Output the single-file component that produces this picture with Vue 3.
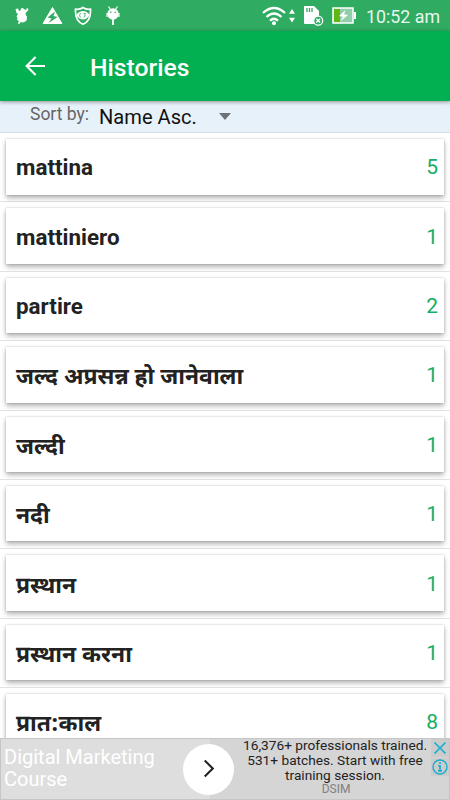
<template>
  <div class="screen">
    <div class="status-bar">
      <div class="notifications">
        <svg class="icon" viewBox="0 0 14 18">
          <path
            fill="#fff"
            d="M.5 2L3 1.500 4 4l1.500-.5.5-2 2-.5 1.500 1.500 2 .5V1l1.500.5.5 1.500-2 2-1 1.500.5 2 1 1-.5 4-2 1.500-2 .5-2-.5-.5 1.500L3.500 17l-.5-1 1-2-2-1 .5-2.500L1.500 10 2 8.500l1-1.500-1.500-1z"
          />
        </svg>
        <svg class="icon wide" viewBox="0 0 20 20">
          <path fill="#fff" stroke="#fff" stroke-linejoin="round" d="M10 1.500L19.400 17.500H.6z" />
          <path fill="#2fab62" d="M12.500 5.500L5 11.500l4 1-3 4.500 9-6-4-1z" />
        </svg>
        <svg class="icon wide shield" viewBox="0 0 18 20">
          <path
            fill="none"
            stroke="#fff"
            stroke-width="1.700"
            d="M9 1.500c2 1.500 5 2 7.500 1.700C17 11 14.500 16 9 18.300 3.500 16 1 11 1.500 3.200 4 3.500 7 3 9 1.500z"
          />
          <path fill="#fff" d="M2.500 9c3-5.500 10-5.500 13 0-3 6-10 6-13 0z" />
          <path fill="none" stroke="#2fab62" stroke-width=".8" d="M6.500 7q-2 2.500 0 4.500M9.500 7.500h2l-1 1.500q2 1-1 2.200" />
        </svg>
        <svg class="icon robot" viewBox="0 0 14 20">
          <path stroke="#fff" stroke-width="1.200" d="M2.500.5l2 3M11.500.5l-2 3" />
          <circle cx="7" cy="8" r="5.700" fill="#fff" />
          <path stroke="#fff" stroke-width="1.800" d="M7 13v6" />
          <path stroke="#fff" stroke-width="1.200" d="M1 7v4M13 7v4" />
          <circle cx="4.800" cy="6.300" r=".8" fill="#2fab62" />
          <circle cx="9.200" cy="6.300" r=".8" fill="#2fab62" />
        </svg>
      </div>
      <div class="system">
        <svg class="wifi" viewBox="0 0 34 22">
          <g fill="none" stroke="#fff" stroke-width="2.300">
            <path d="M1 8q11-10 22 0M4.500 12q7.500-7 15 0M8 15.700q4-4 8 0" />
          </g>
          <circle cx="12" cy="18.300" r="2" fill="#fff" />
          <path fill="#fff" d="M30 4l3 4.700h-6zM30 17.500l3-4.700h-6z" />
        </svg>
        <svg class="sd" viewBox="0 0 21 22">
          <path fill="#fff" d="M1 1h10l5 5v13H2q-1 0-1-1z" />
          <path stroke="#2fab62" stroke-width="1.300" d="M4 3v4M6.500 3v4M9 3v4" />
          <circle cx="15.200" cy="15.700" r="4.500" fill="#2fab62" stroke="#fff" stroke-width="1.300" />
          <path stroke="#fff" stroke-width="1.400" d="M13.300 13.800l3.800 3.800M17.100 13.800l-3.800 3.800" />
        </svg>
        <svg class="battery" viewBox="0 0 25 18">
          <path fill="#8fcfa9" stroke="#fff" stroke-width="1.500" d="M1 1h20v15H1z" />
          <path fill="#63b512" d="M2 2h6v13H2z" />
          <path fill="#fff" d="M22 5h2v7h-2zM13.500 3L7 9l4 .7L8 14.500 16 8l-4-.7z" />
        </svg>
        <span class="clock">10:52 am</span>
      </div>
    </div>

    <header class="app-bar">
      <svg class="back" viewBox="0 0 20 20">
        <path fill="none" stroke="#fff" stroke-width="2.100" d="M20 10H1.800M10.600 1L1.600 10l9 9" />
      </svg>
      <h1>Histories</h1>
    </header>

    <div class="sort-bar">
      <span class="sort-label">Sort by:</span>
      <span class="sort-value">Name Asc.</span>
      <span class="caret"></span>
    </div>

    <ul class="list">
      <li v-for="item in histories" :key="item.word" class="row">
        <div class="card">
          <span class="word" :class="{ hindi: item.hindi }">{{ item.word }}</span>
          <span class="count">{{ item.count }}</span>
        </div>
      </li>
    </ul>

    <div class="ad">
      <div class="ad-title">Digital Marketing<br />Course</div>
      <div class="ad-body">
        <p>16,376+ professionals trained.<br />531+ batches. Start with free<br />training session.</p>
        <small>DSIM</small>
      </div>
      <div class="ad-go">
        <svg viewBox="0 0 12 20">
          <path fill="none" stroke="#222" stroke-width="2.200" d="M1.500 1.500L10 10l-8.500 8.500" />
        </svg>
      </div>
      <div class="ad-controls">
        <svg viewBox="0 0 18 18">
          <path stroke="#17aed0" stroke-width="1.700" d="M3.500 3.500l11 11M14.500 3.500l-11 11" />
        </svg>
        <svg viewBox="0 0 18 18">
          <circle cx="9" cy="9" r="7" fill="none" stroke="#17aed0" stroke-width="1.400" />
          <path fill="none" stroke="#17aed0" stroke-width="1.700" d="M9 4.200v1.900M7.300 7.900H9v4.900M7 12.800h4" />
        </svg>
      </div>
    </div>
  </div>
</template>

<script setup>
import { ref } from "vue";

const histories = ref([
  { word: "mattina", count: 5 },
  { word: "mattiniero", count: 1 },
  { word: "partire", count: 2 },
  { word: "जल्द अप्रसन्न हो जानेवाला", count: 1, hindi: true },
  { word: "जल्दी", count: 1, hindi: true },
  { word: "नदी", count: 1, hindi: true },
  { word: "प्रस्थान", count: 1, hindi: true },
  { word: "प्रस्थान करना", count: 1, hindi: true },
  { word: "प्रात:काल", count: 8, hindi: true },
]);
</script>

<style>
body {
  margin: 0;
}
</style>

<style scoped>
.screen {
  position: relative;
  display: flex;
  flex-direction: column;
  width: 450px;
  height: 800px;
  overflow: hidden;
  background: #fff;
  font-family: Roboto, "Noto Sans", sans-serif;
}

.status-bar {
  display: flex;
  flex: none;
  align-items: center;
  justify-content: space-between;
  box-sizing: border-box;
  height: 31px;
  padding: 0 10px 0 15px;
  background: #2fab62;
}

.notifications,
.system {
  display: flex;
  align-items: center;
}

.icon {
  width: 14px;
  height: 18px;
}

.icon.wide {
  width: 21px;
  height: 20px;
  margin-left: 13px;
}

.icon.shield {
  width: 18px;
  margin-left: 11px;
}

.icon.robot {
  height: 20px;
  margin-left: 14px;
}

.wifi {
  width: 34px;
  height: 22px;
}

.sd {
  width: 21px;
  height: 22px;
  margin-left: 7px;
}

.battery {
  width: 25px;
  height: 18px;
  margin-left: 8px;
}

.clock {
  margin-left: 9px;
  padding-top: 2px;
  color: #e8f7ee;
  font-size: 17.800px;
  line-height: 29px;
  white-space: nowrap;
}

.app-bar {
  z-index: 1;
  display: flex;
  flex: none;
  align-items: center;
  box-sizing: border-box;
  height: 70px;
  padding: 3px 0 0 25px;
  background: #02af51;
  box-shadow: 0 1px 4px rgba(0, 0, 0, 0.4);
}

.back {
  width: 20px;
  height: 20px;
  margin-top: -3px;
}

.app-bar h1 {
  margin: 0 0 0 45px;
  color: #fff;
  font-size: 24.700px;
  font-weight: 500;
}

.sort-bar {
  display: flex;
  flex: none;
  box-sizing: border-box;
  height: 32px;
  padding-left: 30px;
  border-bottom: 1px solid #d3dde3;
  background: #e7f1f9;
}

.sort-label {
  width: 69px;
  color: #666;
  font-size: 17.500px;
  line-height: 27px;
}

.sort-value {
  width: 120px;
  color: #111;
  font-size: 20.100px;
  line-height: 32px;
}

.caret {
  width: 0;
  height: 0;
  margin-top: 12px;
  border: 6px solid transparent;
  border-top: 7px solid #6c7276;
  border-bottom: 0;
}

.list {
  flex: none;
  margin: 0;
  padding: 0;
  list-style: none;
}

.row {
  box-sizing: border-box;
  height: 69.400px;
  padding: 6px 6px 0;
  border-bottom: 1px solid #e3e3e3;
}

.card {
  display: flex;
  align-items: center;
  justify-content: space-between;
  box-sizing: border-box;
  height: 55.500px;
  padding: 1px 6px 0 10px;
  background: #fff;
  box-shadow: 0 3px 5px rgba(0, 0, 0, 0.3), 0 0 2px rgba(0, 0, 0, 0.2);
}

.word {
  color: #222;
  font-size: 22.400px;
  font-weight: 700;
  white-space: nowrap;
}

.word.hindi {
  padding-top: 6px;
  font-family: "Noto Sans Devanagari", "Noto Sans", sans-serif;
  font-size: 22.900px;
  line-height: 34px;
}

.count {
  color: #14ae64;
  font-size: 21px;
}

.ad {
  position: absolute;
  right: 0;
  bottom: 0;
  left: 0;
  display: flex;
  box-sizing: border-box;
  height: 62px;
  border: 1px solid #c6c6c6;
  background: #d5d5d5;
}

.ad-title {
  flex: none;
  box-sizing: border-box;
  width: 209px;
  padding: 7px 0 0 3px;
  background: #dedede;
  color: #fff;
  font-size: 20px;
  line-height: 22px;
}

.ad-body {
  flex: none;
  width: 250px;
  color: #222;
  font-size: 13.700px;
  line-height: 15px;
  text-align: center;
}

.ad-body p {
  margin: -1px 0 0;
}

.ad-body small {
  display: block;
  margin-left: 2px;
  color: #808080;
  font-size: 12px;
  line-height: 13px;
}

.ad-go {
  position: absolute;
  top: 5px;
  left: 182px;
  display: flex;
  align-items: center;
  justify-content: center;
  width: 51px;
  height: 51px;
  border-radius: 50%;
  background: #fff;
}

.ad-go svg {
  width: 12px;
  height: 19px;
  margin-top: -2px;
}

.ad-controls {
  position: absolute;
  top: 0;
  right: 0;
  display: grid;
  gap: 1px;
}

.ad-controls svg {
  width: 18px;
  height: 18px;
  background: #cbcbcb;
}
</style>
